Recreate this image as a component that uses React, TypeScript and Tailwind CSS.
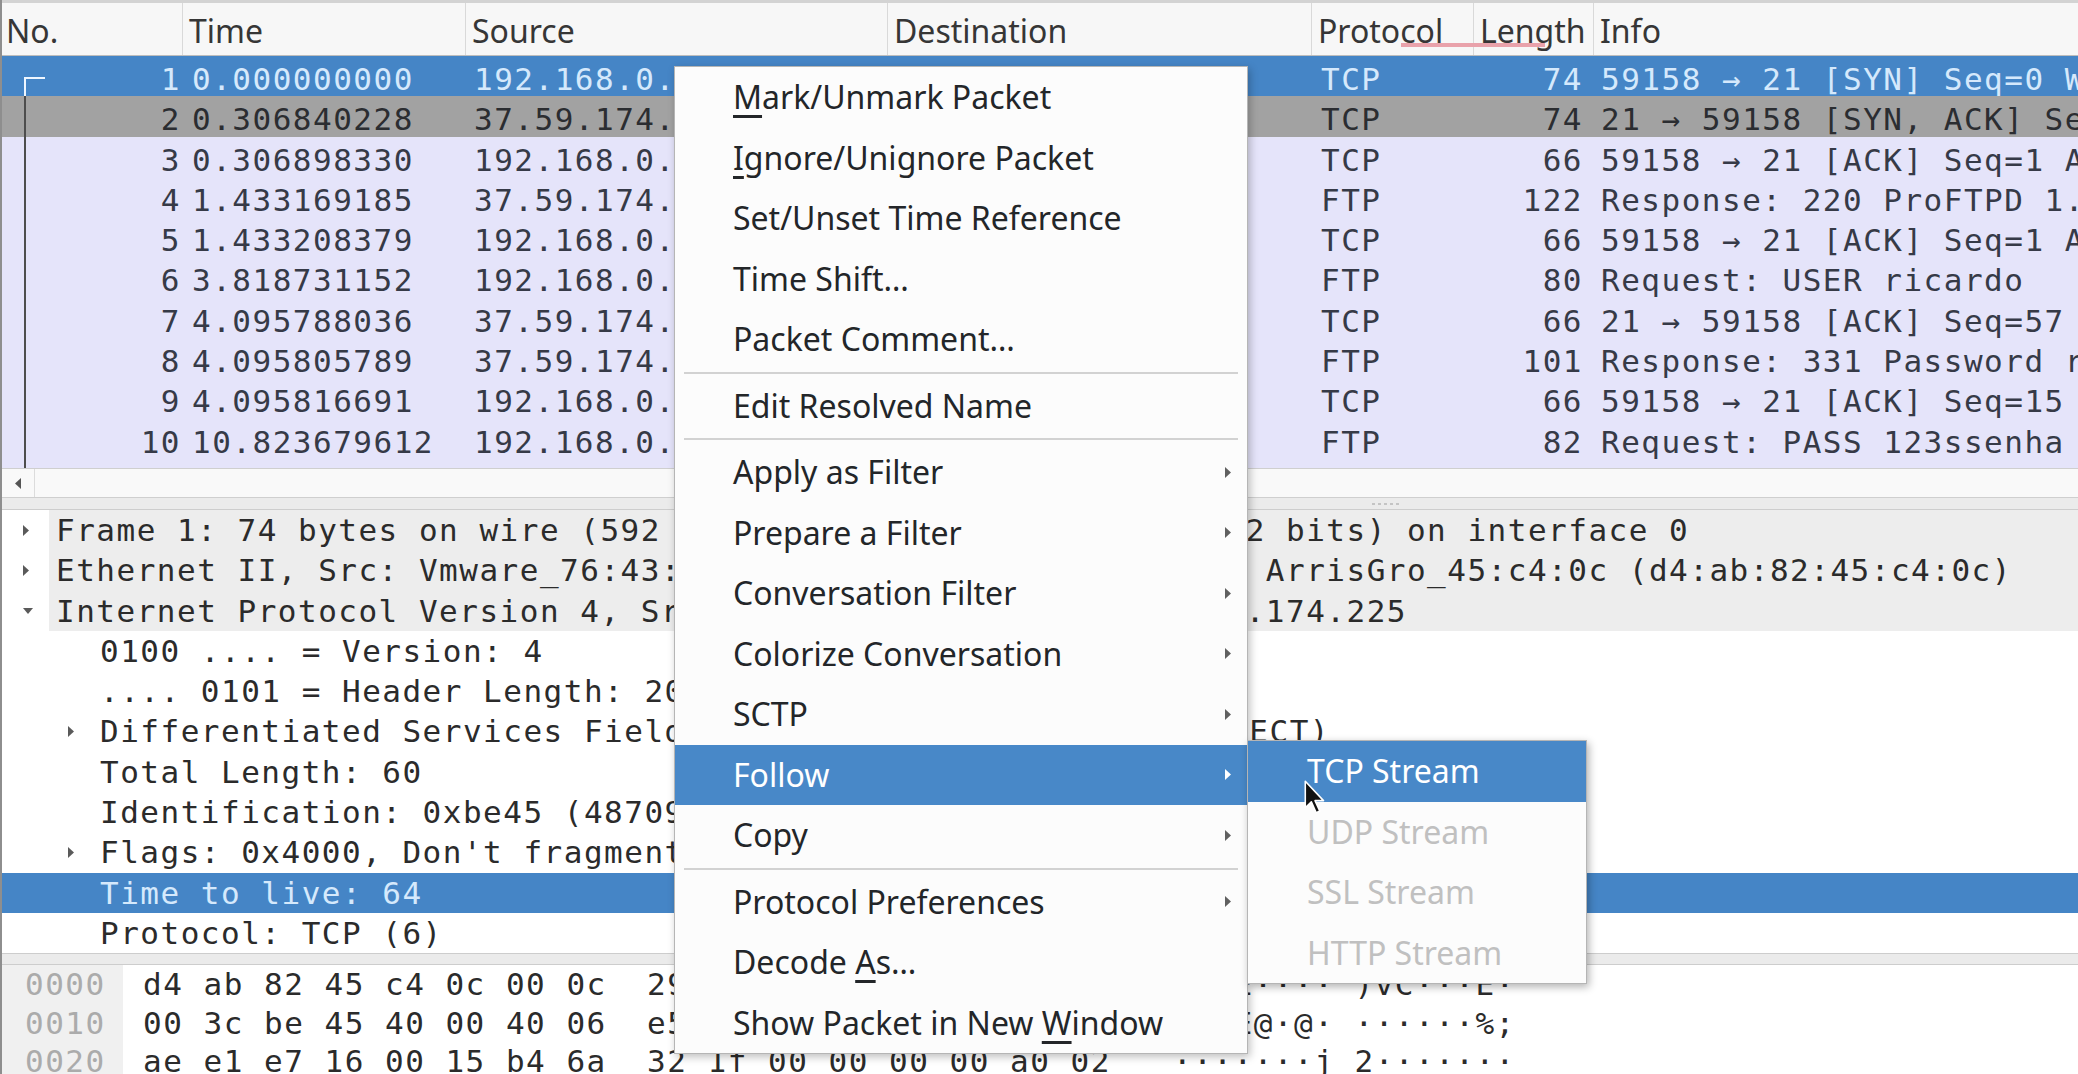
import React from "react";

const mono = "font-['DejaVu_Sans_Mono',monospace] text-[31px] tracking-[1.5px] whitespace-pre";
const sans = "font-['Noto_Sans',sans-serif]";
const cols = "grid-cols-[181px_283px_422px_424px_162px_120px_1fr]";

type Packet = {
  no: number;
  time: string;
  src: string;
  dst: string;
  proto: string;
  len: number;
  info: string;
};

const packets: Packet[] = [
  { no: 1, time: "0.000000000", src: "192.168.0.130", dst: "37.59.174.225", proto: "TCP", len: 74, info: "59158 → 21 [SYN] Seq=0 Win=29200 Len=0 MSS=1460" },
  { no: 2, time: "0.306840228", src: "37.59.174.225", dst: "192.168.0.130", proto: "TCP", len: 74, info: "21 → 59158 [SYN, ACK] Seq=0 Ack=1 Win=28960" },
  { no: 3, time: "0.306898330", src: "192.168.0.130", dst: "37.59.174.225", proto: "TCP", len: 66, info: "59158 → 21 [ACK] Seq=1 Ack=1 Win=29312 Len=0" },
  { no: 4, time: "1.433169185", src: "37.59.174.225", dst: "192.168.0.130", proto: "FTP", len: 122, info: "Response: 220 ProFTPD 1.3.5 Server (Debian)" },
  { no: 5, time: "1.433208379", src: "192.168.0.130", dst: "37.59.174.225", proto: "TCP", len: 66, info: "59158 → 21 [ACK] Seq=1 Ack=57 Win=29312 Len=0" },
  { no: 6, time: "3.818731152", src: "192.168.0.130", dst: "37.59.174.225", proto: "FTP", len: 80, info: "Request: USER ricardo" },
  { no: 7, time: "4.095788036", src: "37.59.174.225", dst: "192.168.0.130", proto: "TCP", len: 66, info: "21 → 59158 [ACK] Seq=57 Ack=15 Win=29056 Len=0" },
  { no: 8, time: "4.095805789", src: "37.59.174.225", dst: "192.168.0.130", proto: "FTP", len: 101, info: "Response: 331 Password required for ricardo" },
  { no: 9, time: "4.095816691", src: "192.168.0.130", dst: "37.59.174.225", proto: "TCP", len: 66, info: "59158 → 21 [ACK] Seq=15 Ack=92 Win=29312 Len=0" },
  { no: 10, time: "10.823679612", src: "192.168.0.130", dst: "37.59.174.225", proto: "FTP", len: 82, info: "Request: PASS 123ssenha" },
];

type Node = { level: 0 | 1; caret?: "right" | "down"; text: string; selected?: boolean };

const details: Node[] = [
  { level: 0, caret: "right", text: "Frame 1: 74 bytes on wire (592 bits), 74 bytes captured (592 bits) on interface 0" },
  { level: 0, caret: "right", text: "Ethernet II, Src: Vmware_76:43:e6 (00:0c:29:76:43:e6), Dst: ArrisGro_45:c4:0c (d4:ab:82:45:c4:0c)" },
  { level: 0, caret: "down", text: "Internet Protocol Version 4, Src: 192.168.0.130, Dst: 37.59.174.225" },
  { level: 1, text: "0100 .... = Version: 4" },
  { level: 1, text: ".... 0101 = Header Length: 20 bytes (5)" },
  { level: 1, caret: "right", text: "Differentiated Services Field: 0x00 (DSCP: CS0, ECN: Not-ECT)" },
  { level: 1, text: "Total Length: 60" },
  { level: 1, text: "Identification: 0xbe45 (48709)" },
  { level: 1, caret: "right", text: "Flags: 0x4000, Don't fragment" },
  { level: 1, text: "Time to live: 64", selected: true },
  { level: 1, text: "Protocol: TCP (6)" },
];

const bytes = [
  { off: "0000", hex: "d4 ab 82 45 c4 0c 00 0c  29 76 43 e6 08 00 45 00", ascii: "···E···· )vC···E·" },
  { off: "0010", hex: "00 3c be 45 40 00 40 06  e5 2c c0 a8 00 82 25 3b", ascii: "·<·E@·@· ······%;" },
  { off: "0020", hex: "ae e1 e7 16 00 15 b4 6a  32 1f 00 00 00 00 a0 02", ascii: "·······j 2·······" },
];

function Caret({ dir }: { dir: "right" | "down" | "left" }) {
  if (dir === "down") {
    return (
      <svg width="12" height="8" viewBox="0 0 12 8">
        <path d="M1 1h10L6 7z" fill="currentColor" />
      </svg>
    );
  }
  if (dir === "left") {
    return (
      <svg width="8" height="13" viewBox="0 0 8 13">
        <path d="M7 1v11L1 6.5z" fill="currentColor" />
      </svg>
    );
  }
  return (
    <svg width="8" height="13" viewBox="0 0 8 13">
      <path d="M1 1v11l6-5.5z" fill="currentColor" />
    </svg>
  );
}

function PacketRow({ p, i }: { p: Packet; i: number }) {
  const tone =
    i === 0
      ? "bg-[#4585c6] text-[#d5e9fc]"
      : i === 1
        ? "bg-[#a2a2a2] text-[#2b2d31]"
        : "bg-[#e5e4fa] text-[#363a47]";
  return (
    <div className={`grid ${cols} h-[40.3px] shrink-0 items-center pb-[5px] ${tone} ${mono}`}>
      <div className="relative h-full flex items-center justify-end pr-[2px]">
        {i === 0 ? (
          <>
            <div className="absolute left-[22px] top-[21px] w-[21px] h-[2px] bg-[#eef6ff]" />
            <div className="absolute left-[22px] top-[21px] -bottom-[5px] w-[2px] bg-[#eef6ff]" />
          </>
        ) : (
          <div className="absolute left-[22px] top-0 -bottom-[5px] w-[2px] bg-[#4d4d4d]" />
        )}
        {p.no}
      </div>
      <div className="overflow-hidden pl-[9px]">{p.time}</div>
      <div className="overflow-hidden pl-[8px]">{p.src}</div>
      <div className="overflow-hidden pl-[8px]">{p.dst}</div>
      <div className="overflow-hidden pl-[9px]">{p.proto}</div>
      <div className="overflow-hidden text-right pr-[11px]">{p.len}</div>
      <div className="overflow-hidden pl-[7px]">{p.info}</div>
    </div>
  );
}

function DetailRow({ n }: { n: Node }) {
  if (n.level === 0) {
    return (
      <div className={`flex h-[40.3px] shrink-0 text-[#2b2b2b] ${mono}`}>
        <div className="w-[47px] shrink-0 flex items-center pl-[20px] text-[#5a5a5a]">
          <Caret dir={n.caret ?? "right"} />
        </div>
        <div className="flex-1 flex items-center pl-[7px] bg-[#ededed] overflow-hidden">{n.text}</div>
      </div>
    );
  }
  const tone = n.selected ? "bg-[#4585c6] text-[#d5e9fc]" : "text-[#2b2b2b]";
  return (
    <div className={`flex h-[40.3px] shrink-0 items-center ${tone} ${mono}`}>
      <div className="w-[98px] shrink-0 flex items-center pl-[65px] text-[#5a5a5a]">
        {n.caret && <Caret dir={n.caret} />}
      </div>
      <div className="overflow-hidden">{n.text}</div>
    </div>
  );
}

type Item = { label: React.ReactNode; sub?: boolean; active?: boolean } | "sep";

const menu: Item[] = [
  { label: <><u className="underline-offset-[6px]">M</u>ark/Unmark Packet</> },
  { label: <><u className="underline-offset-[6px]">I</u>gnore/Unignore Packet</> },
  { label: "Set/Unset Time Reference" },
  { label: "Time Shift…" },
  { label: "Packet Comment…" },
  "sep",
  { label: "Edit Resolved Name" },
  "sep",
  { label: "Apply as Filter", sub: true },
  { label: "Prepare a Filter", sub: true },
  { label: "Conversation Filter", sub: true },
  { label: "Colorize Conversation", sub: true },
  { label: "SCTP", sub: true },
  { label: "Follow", sub: true, active: true },
  { label: "Copy", sub: true },
  "sep",
  { label: "Protocol Preferences", sub: true },
  { label: <>Decode <u className="underline-offset-[6px]">A</u>s…</> },
  { label: <>Show Packet in New <u className="underline-offset-[6px]">W</u>indow</> },
];

function ContextMenu() {
  return (
    <div className={`absolute left-[672px] top-[66px] w-[574px] bg-[#fcfcfc] border border-[#b5b5b5] shadow-[2px_3px_8px_rgba(0,0,0,0.25)] ${sans} text-[32px]`}>
      {menu.map((it, i) =>
        it === "sep" ? (
          <div key={i} className="h-[6px] flex items-center px-[9px]">
            <div className="h-[2px] w-full bg-[#d2d2d2]" />
          </div>
        ) : (
          <div
            key={i}
            className={`h-[60.5px] flex items-center justify-between pl-[58px] pr-[15px] ${
              it.active ? "bg-[#4888c8] text-white" : "text-[#232629]"
            }`}
          >
            <span className="whitespace-pre">{it.label}</span>
            {it.sub && (
              <span className={it.active ? "text-white" : "text-[#606060]"}>
                <Caret dir="right" />
              </span>
            )}
          </div>
        )
      )}
    </div>
  );
}

function FollowMenu() {
  const items = ["TCP Stream", "UDP Stream", "SSL Stream", "HTTP Stream"];
  return (
    <div className={`absolute left-[1245px] top-[740px] w-[340px] bg-[#fcfcfc] border border-[#b5b5b5] shadow-[2px_3px_8px_rgba(0,0,0,0.3)] ${sans} text-[32px]`}>
      {items.map((t, i) => (
        <div
          key={t}
          className={`h-[60.5px] flex items-center pl-[59px] whitespace-pre ${
            i === 0 ? "bg-[#4888c8] text-white" : "text-[#c0c0c0]"
          }`}
        >
          {t}
        </div>
      ))}
    </div>
  );
}

function Cursor() {
  return (
    <svg className="absolute left-[1302px] top-[780px]" width="22" height="34" viewBox="0 0 18 28">
      <path d="M1 1v22l5-5 4 9 3-1.4-4-8.6h7z" fill="#111" stroke="#fff" strokeWidth="1.3" strokeLinejoin="round" />
    </svg>
  );
}

export default function App() {
  return (
    <div className="relative w-[2078px] h-[1074px] overflow-hidden bg-white border-l-2 border-[#8e8e8e] flex flex-col">
      {/* packet list header */}
      <div className={`grid ${cols} h-[56px] shrink-0 border-t-[3px] border-[#d3d3d3] bg-[#f7f7f7] border-b border-b-[#bdbdbd] text-[32px] text-[#363636] ${sans}`}>
        {["No.", "Time", "Source", "Destination", "Protocol", "Length", "Info"].map((h, i) => (
          <div
            key={h}
            className={`flex items-center pt-[4px] whitespace-pre ${i === 0 ? "pl-[4px]" : "pl-[6px]"} ${i < 6 ? "border-r border-[#d9d9d9]" : ""}`}
          >
            {h}
          </div>
        ))}
      </div>
      <div className="absolute left-[1399px] top-[43px] w-[144px] h-[4px] bg-[#e9a2ab]" />

      {/* packet list */}
      <div className="h-[412px] shrink-0 overflow-hidden flex flex-col">
        {packets.map((p, i) => (
          <PacketRow key={p.no} p={p} i={i} />
        ))}
        <div className="relative h-[40px] shrink-0 bg-[#e5e4fa]">
          <div className="absolute left-[22px] top-0 bottom-0 w-[2px] bg-[#4d4d4d]" />
        </div>
      </div>

      {/* horizontal scrollbar */}
      <div className="h-[30px] shrink-0 flex border-t border-b border-[#cfcfcf] bg-[#f9f9f9]">
        <div className="w-[33px] flex items-center justify-center border-r border-[#dcdcdc] text-[#555]">
          <Caret dir="left" />
        </div>
        <div className="flex-1" />
      </div>

      {/* splitter */}
      <div className="h-[12px] shrink-0 bg-[#ebebeb] border-b border-[#cdcdcd] flex items-center justify-center">
        <div className="ml-[690px] flex gap-[3px]">
          {[0, 1, 2, 3, 4].map((d) => (
            <div key={d} className="w-[3px] h-[2px] bg-[#c4c4c4]" />
          ))}
        </div>
      </div>

      {/* packet details */}
      <div className="h-[443px] shrink-0 overflow-hidden flex flex-col">
        {details.map((n, i) => (
          <DetailRow key={i} n={n} />
        ))}
      </div>

      {/* splitter */}
      <div className="h-[12px] shrink-0 bg-[#ebebeb] border-t border-b border-[#cdcdcd]" />

      {/* packet bytes */}
      <div className={`flex-1 flex flex-col ${mono}`}>
        {bytes.map((b) => (
          <div key={b.off} className="flex h-[38.5px] shrink-0 items-center">
            <div className="w-[121px] h-full shrink-0 flex items-center pl-[23px] bg-[#f0f0f0] text-[#ababab]">{b.off}</div>
            <div className="w-[1050px] shrink-0 pl-[20px] text-[#2b2b2b]">{b.hex}</div>
            <div className="text-[#2b2b2b]">{b.ascii}</div>
          </div>
        ))}
      </div>

      <ContextMenu />
      <FollowMenu />
      <Cursor />
    </div>
  );
}
